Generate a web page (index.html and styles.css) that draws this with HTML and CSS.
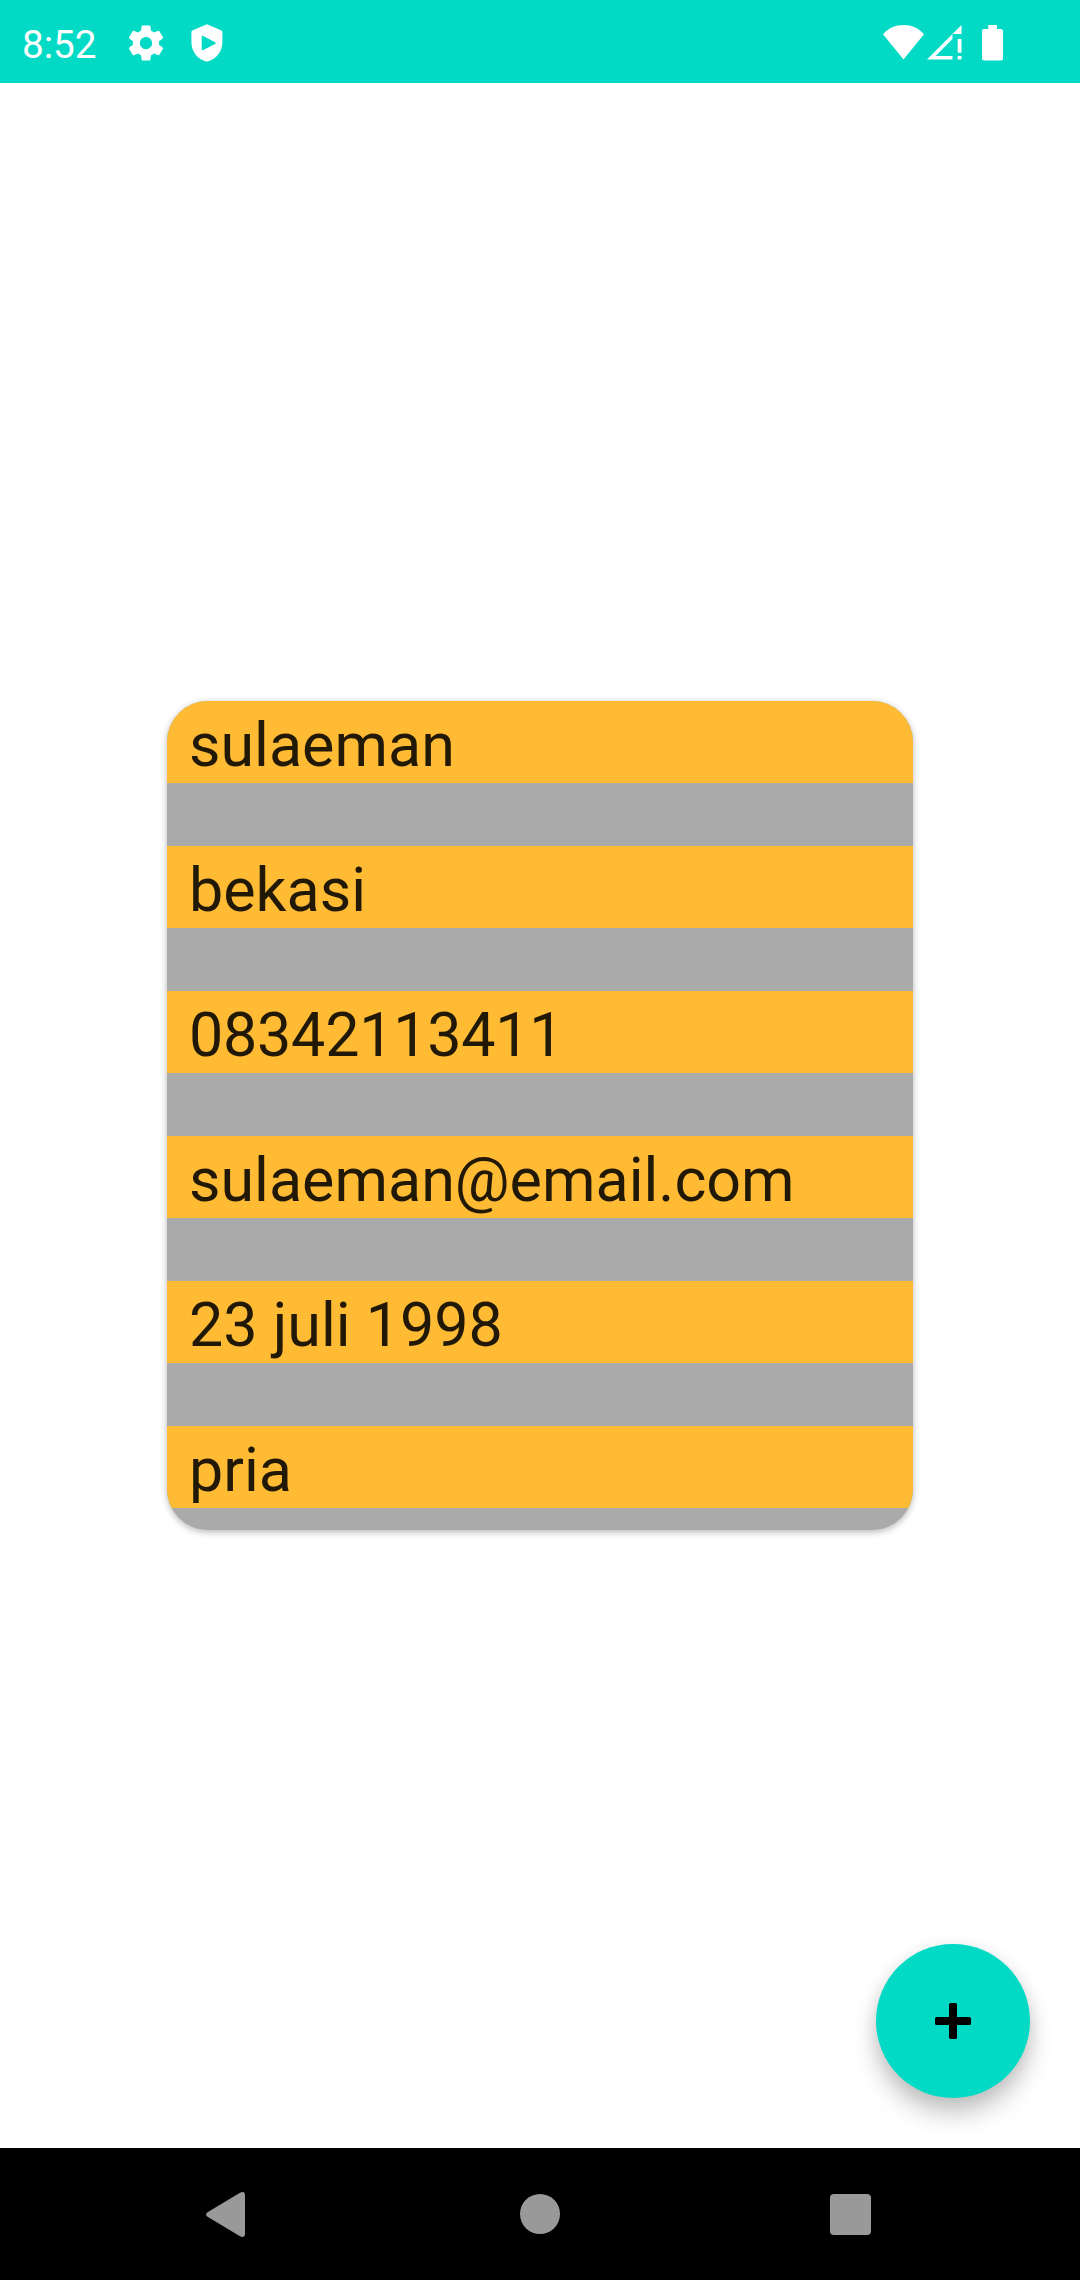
FILE: index.html
```html
<!DOCTYPE html>
<html lang="id">
<head>
<meta charset="utf-8">
<title>Profil</title>
<link rel="stylesheet" href="styles.css">
</head>
<body>
<div class="screen">
  <header class="status-bar">
    <span class="clock">8:52</span>
    <svg class="icon-settings" viewBox="0 0 24 24"><path d="M19.43 12.98c.04-.32.07-.64.07-.98s-.03-.66-.07-.98l2.11-1.65c.19-.15.24-.42.12-.64l-2-3.46c-.12-.22-.39-.3-.61-.22l-2.49 1c-.52-.4-1.08-.73-1.69-.98l-.38-2.65C14.46 2.18 14.25 2 14 2h-4c-.25 0-.46.18-.49.42l-.38 2.65c-.61.25-1.17.59-1.69.98l-2.49-1c-.23-.09-.49 0-.61.22l-2 3.46c-.13.22-.07.49.12.64l2.11 1.65c-.04.32-.07.65-.07.98s.03.66.07.98l-2.11 1.65c-.19.15-.24.42-.12.64l2 3.46c.12.22.39.3.61.22l2.49-1c.52.4 1.08.73 1.69.98l.38 2.65c.03.24.24.42.49.42h4c.25 0 .46-.18.49-.42l.38-2.65c.61-.25 1.17-.59 1.69-.98l2.49 1c.23.09.49 0 .61-.22l2-3.46c.12-.22.07-.49-.12-.64l-2.11-1.65zM12 15.5c-1.93 0-3.5-1.57-3.5-3.5s1.57-3.5 3.5-3.5 3.5 1.57 3.5 3.5-1.57 3.5-3.5 3.5z"/></svg>
    <svg class="icon-protect" viewBox="0 0 32 38"><path fill-rule="evenodd" d="M15.9.2 30 6.3q1.4.6 1.4 2V18c0 9.500-6 17.200-15.500 19.800C6.400 35.200.4 27.500.4 18V8.300q0-1.400 1.400-2zM10.700 13v12q0 1.800 1.600 1l11.800-5.900q1.600-.9 0-1.800L12.300 12q-1.600-.8-1.600 1z"/></svg>
    <div class="system-icons">
      <svg class="icon-wifi" viewBox="0 0 41 35"><path d="M0 9.200C5.500 3 12.500 0 20.500 0S35.500 3 41 9.200L20.500 34.500z"/></svg>
      <svg class="icon-signal" viewBox="0 0 35 35"><path fill-rule="evenodd" d="M34.500 0v9H25.500v25.500H0zM25.500 14 8.700 31H25.500zM30.700 14h3.800v13.700h-3.800zM30.700 31h3.800v3.500h-3.800z"/></svg>
      <svg class="icon-battery" viewBox="0 0 21 36"><path d="M6.200 0H15v4h4q2 0 2 2v27.500q0 2-2 2H2q-2 0-2-2V6q0-2 2-2h4.200z"/></svg>
    </div>
  </header>
  <main class="content">
    <section class="card">
      <p class="field">sulaeman</p>
      <p class="field">bekasi</p>
      <p class="field phone">08342113411</p>
      <p class="field">sulaeman@email.com</p>
      <p class="field">23 juli 1998</p>
      <p class="field">pria</p>
    </section>
    <button class="fab" aria-label="Tambah">
      <svg class="icon-plus" viewBox="0 0 36 36"><rect x="14" width="8" height="36" rx="1.500"/><rect y="14" width="36" height="8" rx="1.500"/></svg>
    </button>
  </main>
  <nav class="nav-bar">
    <svg class="nav-back" viewBox="0 0 39 45"><path d="M1.500 20.200 34 .7q5-2 5 2.800v38q0 4.800-5 2.800L1.500 24.800q-3-2.300 0-4.600z"/></svg>
    <svg class="nav-home" viewBox="0 0 40 40"><circle cx="20" cy="20" r="20"/></svg>
    <svg class="nav-recent" viewBox="0 0 41 41"><rect width="41" height="41" rx="4"/></svg>
  </nav>
</div>
</body>
</html>
```
FILE: styles.css
```css
* { box-sizing: border-box; }
body { margin: 0; background: #fff; font-family: Roboto, sans-serif; }
svg { display: block; flex: none; }
.screen { width: 1080px; height: 2280px; display: flex; flex-direction: column; overflow: hidden; }

.status-bar { height: 83px; flex: none; display: flex; align-items: flex-start; padding: 0 77px 0 22px; background: #03dac5; color: #fff; fill: #fff; }
.clock { width: 103.300px; padding-top: 22px; font-size: 38.700px; line-height: 45px; }
.icon-settings { width: 42px; height: 42px; margin-top: 22.300px; }
.icon-protect { width: 32px; height: 38px; margin: 24px 0 0 24px; }
.system-icons { display: flex; margin: 25px 0 0 auto; }
.icon-wifi { width: 41px; height: 35px; }
.icon-signal { width: 35px; height: 35px; margin-left: 3px; }
.icon-battery { width: 21px; height: 36px; margin-left: 20px; }

.content { position: relative; flex: 1; display: flex; align-items: center; justify-content: center; }
.card { width: 746px; padding-bottom: 22px; display: flex; flex-direction: column; gap: 63px; overflow: hidden; border-radius: 41px; background: #aaa; box-shadow: 0 3px 7px rgba(0, 0, 0, .2), 0 0 6px rgba(0, 0, 0, .1); }
.field { margin: 0; height: 82px; padding: 6px 22px 0; background: #fb3; color: rgba(0, 0, 0, .87); font-size: 61px; line-height: 76px; white-space: nowrap; }
.phone { letter-spacing: -.25px; }
.fab { position: absolute; right: 50px; bottom: 50px; width: 154px; height: 154px; padding: 0; border: 0; border-radius: 50%; display: grid; place-items: center; background: #03dac5; box-shadow: 0 16px 24px rgba(0, 0, 0, .22), 0 2px 16px rgba(0, 0, 0, .08); }
.icon-plus { width: 36px; height: 36px; fill: #000; }

.nav-bar { height: 132px; flex: none; display: flex; align-items: center; justify-content: space-between; padding: 0 209px 0 206px; background: #000; fill: #999; }
.nav-back { width: 39px; height: 45px; }
.nav-home { width: 40px; height: 40px; margin-left: 5px; }
.nav-recent { width: 41px; height: 41px; }
```
